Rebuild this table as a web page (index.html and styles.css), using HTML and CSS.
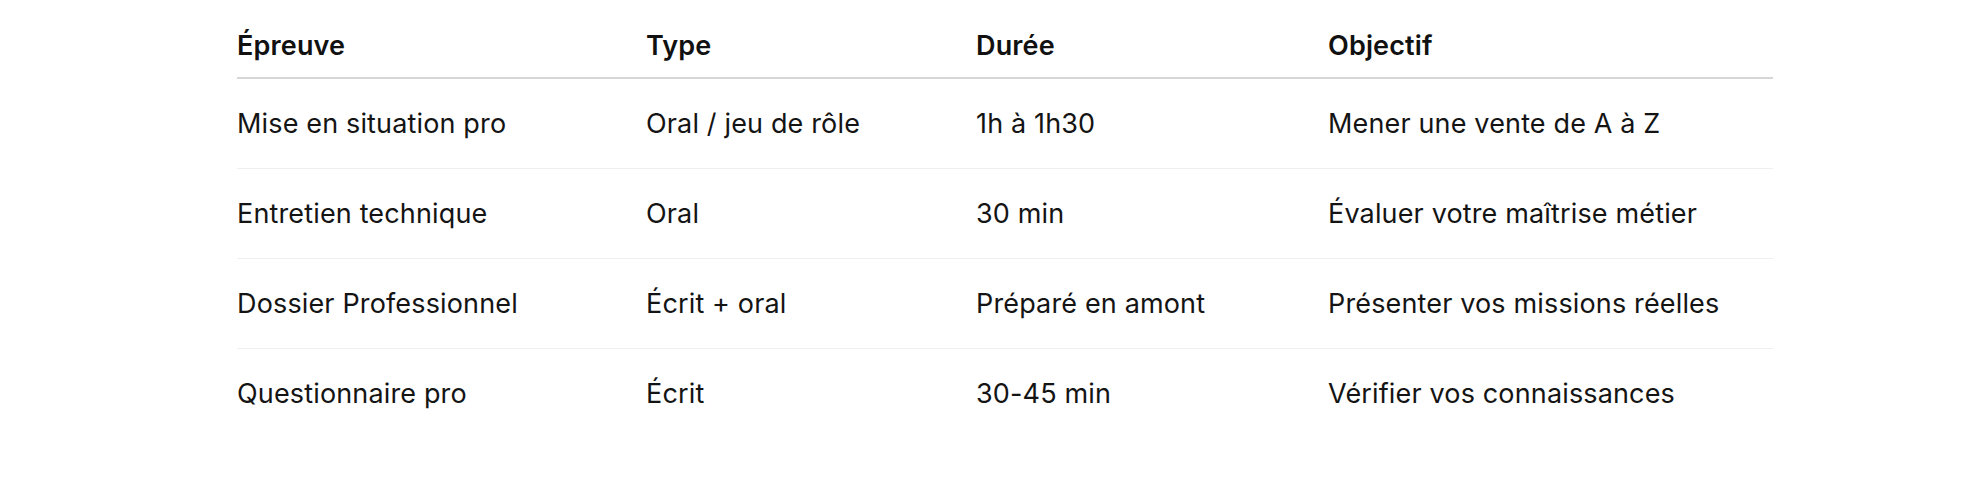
FILE: index.html
```html
<!DOCTYPE html>
<html lang="fr">
<head>
<meta charset="utf-8">
<title>Épreuves</title>
<link rel="stylesheet" href="styles.css">
</head>
<body>
<div class="wrap">
  <table class="exams">
    <colgroup>
      <col class="c1"><col class="c2"><col class="c3"><col class="c4">
    </colgroup>
    <thead>
      <tr><th>Épreuve</th><th>Type</th><th>Durée</th><th>Objectif</th></tr>
    </thead>
    <tbody>
      <tr><td>Mise en situation pro</td><td>Oral / jeu de rôle</td><td>1h à 1h30</td><td>Mener une vente de A à Z</td></tr>
      <tr><td>Entretien technique</td><td>Oral</td><td>30 min</td><td>Évaluer votre maîtrise métier</td></tr>
      <tr><td>Dossier Professionnel</td><td>Écrit + oral</td><td>Préparé en amont</td><td>Présenter vos missions réelles</td></tr>
      <tr class="last"><td>Questionnaire pro</td><td>Écrit</td><td>30-45 min</td><td>Vérifier vos connaissances</td></tr>
    </tbody>
  </table>
</div>
</body>
</html>
```

FILE: styles.css
```css
html, body {
  margin: 0;
  padding: 0;
  background: #ffffff;
}

body {
  font-family: Inter, "Noto Sans", "Liberation Sans", sans-serif;
  color: #141414;
  font-size: 27px;
  line-height: 36px;
  letter-spacing: 0.15px;
}

.wrap {
  padding-left: 237px;
}

.exams {
  width: 1536px;
  border-collapse: collapse;
  table-layout: fixed;
}

.c1 { width: 409px; }
.c2 { width: 330px; }
.c3 { width: 352px; }
.c4 { width: 445px; }

.exams th {
  text-align: left;
  font-weight: 600;
  padding: 28px 0 13px 0;
  border-bottom: 2px solid #d6d6d6;
  color: #111111;
}

.exams td {
  padding: 27px 0 26px 0;
  border-bottom: 1px solid #efefef;
  font-weight: 400;
  vertical-align: top;
}

.exams tr.last td {
  border-bottom: none;
}
```
